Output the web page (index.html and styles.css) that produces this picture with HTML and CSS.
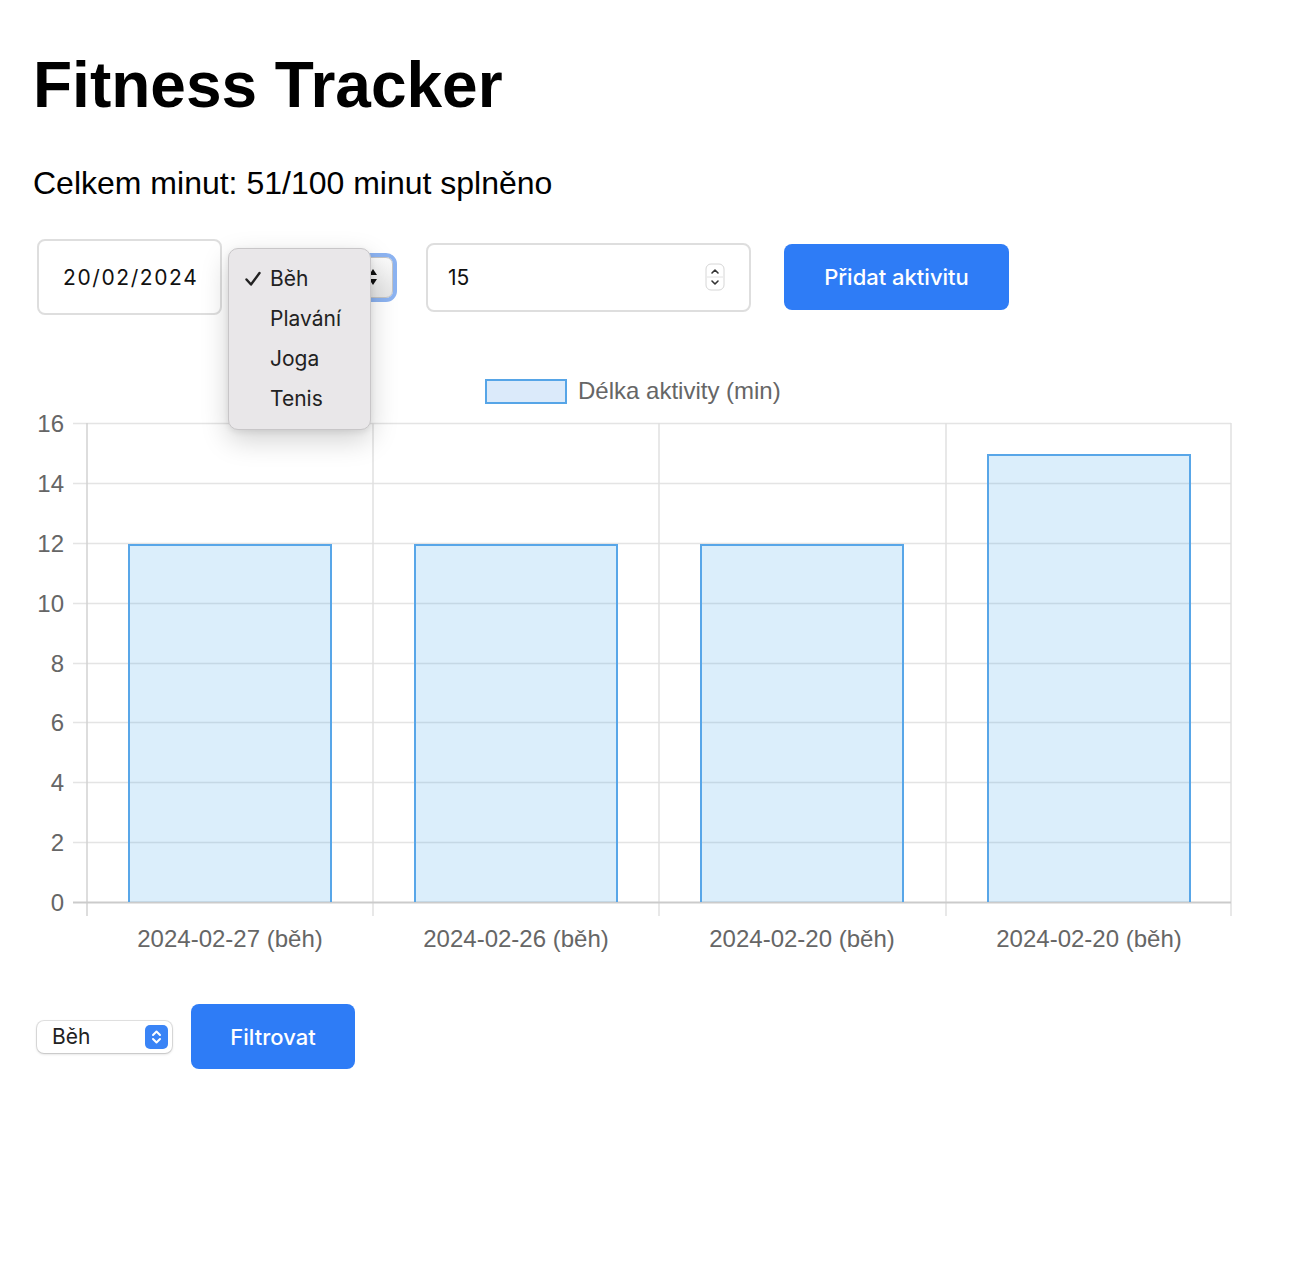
FILE: index.html
```html
<!DOCTYPE html>
<html lang="cs">
<head>
<meta charset="utf-8">
<title>Fitness Tracker</title>
<link rel="stylesheet" href="styles.css">
</head>
<body>
<div class="page">
  <h1 class="title">Fitness Tracker</h1>
  <p class="total">Celkem minut: 51/100 minut splněno</p>

  <div class="controls">
    <div class="field date-field">20/02/2024</div>

    <div class="select-wrap">
      <div class="select-classic">
        <svg class="updown" width="10" height="18" viewBox="0 0 10 18"><path d="M5 1 L9 7 H1 Z M5 17 L9 11 H1 Z" fill="#111"/></svg>
      </div>
      <ul class="popup">
        <li class="opt checked"><svg class="check" width="18" height="18" viewBox="0 0 18 18"><path d="M2.5 9.5 L7 14.5 L15.5 3" fill="none" stroke="#222" stroke-width="2.4" stroke-linecap="round" stroke-linejoin="round"/></svg>Běh</li>
        <li class="opt">Plavání</li>
        <li class="opt">Joga</li>
        <li class="opt">Tenis</li>
      </ul>
    </div>

    <div class="field num-field">
      <span>15</span>
      <svg class="spinner" width="20" height="28" viewBox="0 0 20 28">
        <rect x="1" y="1" width="18" height="26" rx="5" fill="#fff" stroke="#d6d6d6"/>
        <line x1="2" y1="14" x2="18" y2="14" stroke="#e2e2e2"/>
        <path d="M7 10 L10 7 L13 10" fill="none" stroke="#333" stroke-width="1.6" stroke-linecap="round" stroke-linejoin="round"/>
        <path d="M7 18 L10 21 L13 18" fill="none" stroke="#333" stroke-width="1.6" stroke-linecap="round" stroke-linejoin="round"/>
      </svg>
    </div>

    <button class="btn btn-add">Přidat aktivitu</button>
  </div>

  <svg class="chart" width="1240" height="600" viewBox="0 0 1240 600">
    <!-- legend -->
    <rect x="453" y="20" width="80" height="23" fill="#dbeafa" stroke="#56a5e7" stroke-width="2"/>
    <text class="legend" x="545" y="39">Délka aktivity (min)</text>

    <!-- horizontal grid -->
    <g stroke="#e4e4e4" stroke-width="1.5">
      <line x1="40" y1="63.5" x2="1198" y2="63.5"/>
      <line x1="40" y1="123.5" x2="1198" y2="123.5"/>
      <line x1="40" y1="183.5" x2="1198" y2="183.5"/>
      <line x1="40" y1="243.5" x2="1198" y2="243.5"/>
      <line x1="40" y1="303.5" x2="1198" y2="303.5"/>
      <line x1="40" y1="362.5" x2="1198" y2="362.5"/>
      <line x1="40" y1="422.5" x2="1198" y2="422.5"/>
      <line x1="40" y1="482.5" x2="1198" y2="482.5"/>
    </g>
    <!-- vertical grid -->
    <g stroke="#e0e0e0" stroke-width="1.5">
      <line x1="340" y1="63" x2="340" y2="556"/>
      <line x1="626" y1="63" x2="626" y2="556"/>
      <line x1="913" y1="63" x2="913" y2="556"/>
      <line x1="1198" y1="63" x2="1198" y2="556"/>
    </g>
    <line x1="54" y1="63" x2="54" y2="556" stroke="#d2d2d2" stroke-width="1.5"/>
    <line x1="40" y1="542.5" x2="1198" y2="542.5" stroke="#cbcbcb" stroke-width="2"/>

    <!-- y labels -->
    <g class="tick" text-anchor="end">
      <text x="31" y="72">16</text>
      <text x="31" y="132">14</text>
      <text x="31" y="192">12</text>
      <text x="31" y="252">10</text>
      <text x="31" y="312">8</text>
      <text x="31" y="371">6</text>
      <text x="31" y="431">4</text>
      <text x="31" y="491">2</text>
      <text x="31" y="551">0</text>
    </g>

    <!-- bars -->
    <g fill="rgba(54,162,235,0.18)">
      <rect x="95" y="184" width="204" height="358"/>
      <rect x="381" y="184" width="204" height="358"/>
      <rect x="667" y="184" width="204" height="358"/>
      <rect x="954" y="94" width="204" height="448"/>
    </g>
    <g fill="none" stroke="#58a6e8" stroke-width="2">
      <path d="M96 542 V185 H298 V542"/>
      <path d="M382 542 V185 H584 V542"/>
      <path d="M668 542 V185 H870 V542"/>
      <path d="M955 542 V95 H1157 V542"/>
    </g>

    <!-- x labels -->
    <g class="tick" text-anchor="middle">
      <text x="197" y="587">2024-02-27 (běh)</text>
      <text x="483" y="587">2024-02-26 (běh)</text>
      <text x="769" y="587">2024-02-20 (běh)</text>
      <text x="1056" y="587">2024-02-20 (běh)</text>
    </g>
  </svg>

  <div class="filter-row">
    <div class="select-modern">
      <span>Běh</span>
      <span class="sel-icon">
        <svg width="23" height="24" viewBox="0 0 23 24"><path d="M8 10 L11.5 6.5 L15 10 M8 14 L11.5 17.5 L15 14" fill="none" stroke="#fff" stroke-width="2" stroke-linecap="round" stroke-linejoin="round"/></svg>
      </span>
    </div>
    <button class="btn btn-filter">Filtrovat</button>
  </div>
</div>
</body>
</html>
```

FILE: styles.css
```css
html, body {
  margin: 0;
  padding: 0;
  background: #fff;
}

body {
  font-family: "Liberation Sans", Arial, Helvetica, sans-serif;
  color: #000;
}

.page {
  padding: 0 33px;
}

.title {
  margin: 48px 0 0;
  font-size: 64px;
  line-height: 74px;
  font-weight: 700;
}

.total {
  margin: 43px 0 0;
  font-size: 32px;
  line-height: 37px;
}

.controls {
  margin-top: 37px;
  display: flex;
  align-items: center;
  padding-left: 4px;
  height: 76px;
}

.field {
  box-sizing: border-box;
  border: 2px solid #dedede;
  border-radius: 8px;
  background: #fff;
  font-family: Inter, "Noto Sans", sans-serif;
  font-size: 21px;
  color: #111;
  display: flex;
  align-items: center;
}

.date-field {
  width: 185px;
  height: 76px;
  padding-left: 24px;
  letter-spacing: 1.6px;
}

.select-wrap {
  position: relative;
  margin-left: 14px;
  width: 157px;
  height: 41px;
}

.select-classic {
  box-sizing: border-box;
  width: 157px;
  height: 41px;
  border-radius: 7px;
  background: linear-gradient(#fbfbfb, #e6e6e6);
  border: 1px solid #c4c4c4;
  outline: 4px solid #8cb3f1;
  outline-offset: 0;
  display: flex;
  align-items: center;
  justify-content: flex-end;
  padding-right: 14px;
}

.updown {
  display: block;
}

.popup {
  position: absolute;
  left: -8px;
  top: -9px;
  width: 143px;
  box-sizing: border-box;
  margin: 0;
  padding: 10px 0;
  list-style: none;
  background: #e9e7e9;
  border: 1px solid #c8c6c8;
  border-radius: 10px;
  box-shadow: 0 10px 28px rgba(0, 0, 0, 0.18), 0 2px 6px rgba(0, 0, 0, 0.08);
  font-family: Inter, "Noto Sans", sans-serif;
  font-size: 21px;
  color: #222;
  z-index: 2;
}

.opt {
  height: 40px;
  display: flex;
  align-items: center;
  padding-left: 41px;
  position: relative;
}

.check {
  position: absolute;
  left: 15px;
  top: 11px;
}

.num-field {
  margin-left: 33px;
  width: 325px;
  height: 69px;
  padding-left: 20px;
  padding-right: 24px;
  justify-content: space-between;
}

.spinner {
  display: block;
}

.btn {
  border: none;
  background: #2e7cf6;
  color: #fff;
  font-family: Inter, "Noto Sans", sans-serif;
  font-size: 22px;
  font-weight: 500;
  border-radius: 8px;
  padding: 0;
  cursor: pointer;
}

.btn-add {
  margin-left: 33px;
  width: 225px;
  height: 66px;
}

.chart {
  display: block;
  margin-top: 45px;
}

.chart text {
  font-family: "Liberation Sans", Arial, Helvetica, sans-serif;
  font-size: 24px;
  fill: #666;
}

.filter-row {
  margin-top: 44px;
  display: flex;
  align-items: center;
  padding-left: 4px;
}

.select-modern {
  box-sizing: border-box;
  width: 135px;
  height: 32px;
  background: #fff;
  border-radius: 7px;
  box-shadow: 0 0 0 1px rgba(0, 0, 0, 0.1), 0 1px 3px rgba(0, 0, 0, 0.18);
  display: flex;
  align-items: center;
  justify-content: space-between;
  padding: 0 4px 0 15px;
  font-family: Inter, "Noto Sans", sans-serif;
  font-size: 21px;
  color: #222;
}

.sel-icon {
  width: 23px;
  height: 24px;
  border-radius: 5px;
  background: #3a84f6;
  display: flex;
}

.btn-filter {
  margin-left: 19px;
  width: 164px;
  height: 65px;
}
```
